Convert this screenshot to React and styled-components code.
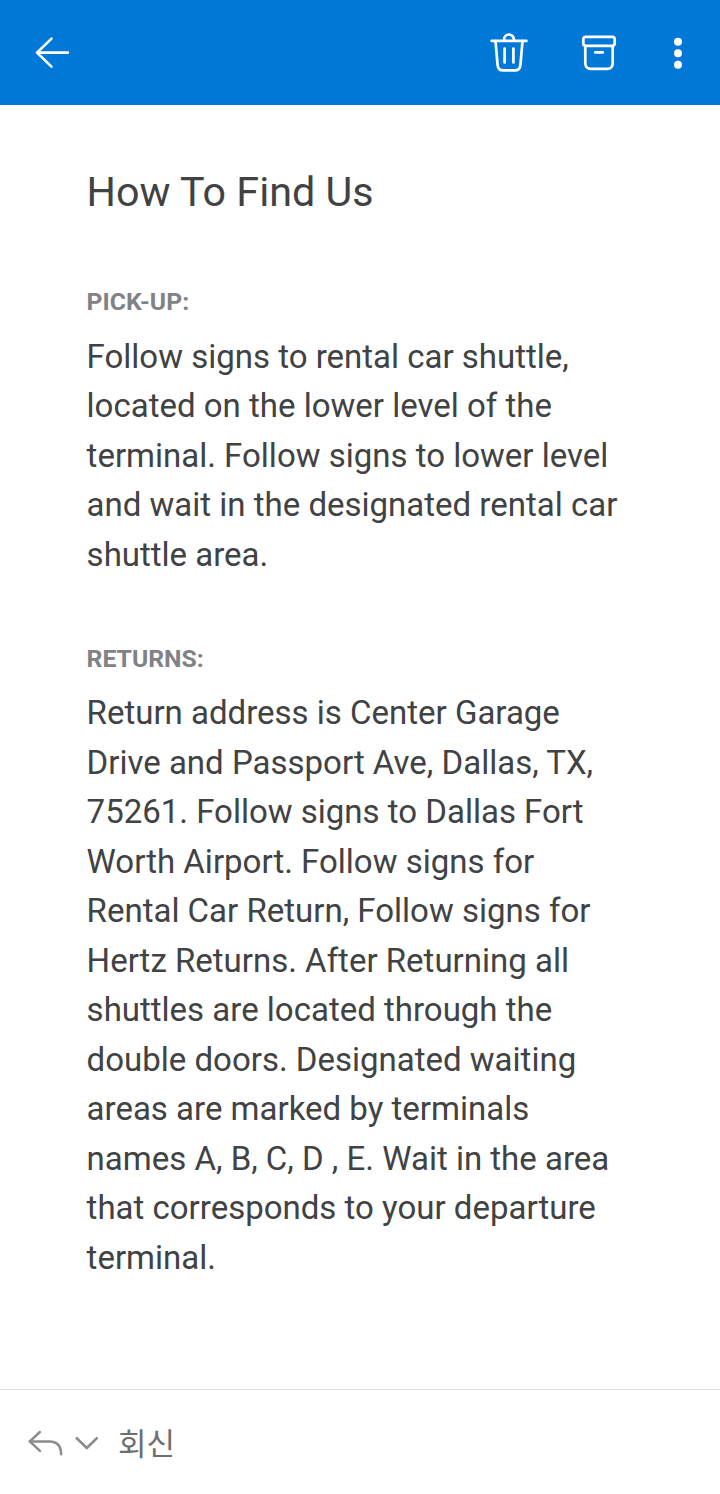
import React from "react";
import styled, { createGlobalStyle } from "styled-components";

const GlobalStyle = createGlobalStyle`
  * {
    box-sizing: border-box;
  }

  body {
    margin: 0;
    background-color: #fff;
    font-family: Roboto, "Noto Sans CJK KR", sans-serif;
  }
`;

const Page = styled.div`
  display: flex;
  flex-direction: column;
  width: 100%;
  max-width: 720px;
  height: 1494px;
`;

const Toolbar = styled.header`
  display: flex;
  align-items: center;
  height: 105px;
  padding: 0 32px;
  background-color: #0078d7;
`;

const Actions = styled.div`
  display: flex;
  align-items: center;
  margin-left: auto;
`;

const IconButton = styled.button`
  display: flex;
  padding: 0;
  margin-left: ${(props) => props.$gap || 0}px;
  border: none;
  background: none;
  color: ${(props) => props.$color || "#fff"};

  svg {
    display: block;
    fill: none;
    stroke: currentColor;
    stroke-linecap: round;
    stroke-linejoin: round;
  }
`;

const Message = styled.main`
  flex: 1;
  padding: 56.5px 92px 0 86.6px;
`;

const Title = styled.h1`
  margin: 0 0 60px;
  font-size: 41.25px;
  font-weight: 400;
  line-height: 1.5;
  color: #414243;
`;

const Section = styled.section`
  margin-bottom: 60.5px;
`;

const Label = styled.h2`
  margin: 0 0 11.5px;
  font-size: 24.75px;
  font-weight: 700;
  line-height: 37px;
  color: #808285;
`;

const Text = styled.p`
  margin: 0;
  font-size: 33px;
  line-height: 49.5px;
  color: #414243;
`;

const ReplyBar = styled.footer`
  display: flex;
  align-items: center;
  height: 105px;
  padding: 2px 27px 0;
  border-top: 1px solid #e1e1e1;
`;

const ReplyLabel = styled.span`
  margin: -3px 0 0 17px;
  font-family: "Noto Sans CJK KR", sans-serif;
  font-size: 31px;
  line-height: 44px;
  color: #6e6e6e;
`;

const sections = [
  {
    label: "PICK-UP:",
    text: "Follow signs to rental car shuttle, located on the lower level of the terminal. Follow signs to lower level and wait in the designated rental car shuttle area.",
  },
  {
    label: "RETURNS:",
    text: "Return address is Center Garage Drive and Passport Ave, Dallas, TX, 75261. Follow signs to Dallas Fort Worth Airport. Follow signs for Rental Car Return, Follow signs for Hertz Returns. After Returning all shuttles are located through the double doors. Designated waiting areas are marked by terminals names A, B, C, D , E. Wait in the area that corresponds to your departure terminal.",
  },
];

const App = () => {
  return (
    <>
      <GlobalStyle />
      <Page>
        <Toolbar>
          <IconButton aria-label="Back">
            <svg width="40" height="40" viewBox="0 0 40 40" strokeWidth="2.6">
              <path d="M36 19.6H5M19.5 5.6 5 19.6l14.5 14" />
            </svg>
          </IconButton>
          <Actions>
            <IconButton aria-label="Delete">
              <svg width="40" height="42" viewBox="0 0 40 42" strokeWidth="2.7">
                <path d="M2.7 8.9h34.7" />
                <path d="M15.1 8.6V7.4a4.9 4.9 0 0 1 9.8 0v1.2" />
                <path d="m6.5 9.2 2.1 23.9c.3 3.5 2.2 5.3 5.5 5.3h11.8c3.3 0 5.2-1.8 5.5-5.3l2.1-23.9" />
                <path d="M15.6 16.5v14M24.4 16.5v14" />
              </svg>
            </IconButton>
            <IconButton aria-label="Archive" $gap={50}>
              <svg width="40" height="40" viewBox="0 0 40 40" strokeWidth="2.7">
                <rect x="4.3" y="3.8" width="31.4" height="9" rx="2.5" />
                <path d="M6.3 13v17c0 3.8 2 5.9 5.7 5.9h16c3.7 0 5.7-2.1 5.7-5.9V13" />
                <path d="M16.3 19.4h7.4" />
              </svg>
            </IconButton>
            <IconButton aria-label="More" $gap={49}>
              <svg width="20" height="40" viewBox="0 0 20 40">
                <g fill="currentColor" stroke="none">
                  <circle cx="10" cy="8.8" r="4" />
                  <circle cx="10" cy="20.2" r="4" />
                  <circle cx="10" cy="31.7" r="4" />
                </g>
              </svg>
            </IconButton>
          </Actions>
        </Toolbar>

        <Message>
          <Title>How To Find Us</Title>
          {sections.map((section) => (
            <Section key={section.label}>
              <Label>{section.label}</Label>
              <Text>{section.text}</Text>
            </Section>
          ))}
        </Message>

        <ReplyBar>
          <IconButton aria-label="Reply" $color="#8c8c8c">
            <svg width="38" height="32" viewBox="0 0 38 32" strokeWidth="2.5">
              <path d="M12.9 5 2.8 14.4l10.1 9.4" />
              <path d="M2.8 14.4h19.7c7.5 0 11.6 4.4 11.6 12.9" />
            </svg>
          </IconButton>
          <IconButton aria-label="Reply options" $gap={8} $color="#8c8c8c">
            <svg width="28" height="20" viewBox="0 0 28 20" strokeWidth="2.6">
              <path d="m3.8 5.2 10 9.8 10-9.8" />
            </svg>
          </IconButton>
          <ReplyLabel>회신</ReplyLabel>
        </ReplyBar>
      </Page>
    </>
  );
};

export default App;
